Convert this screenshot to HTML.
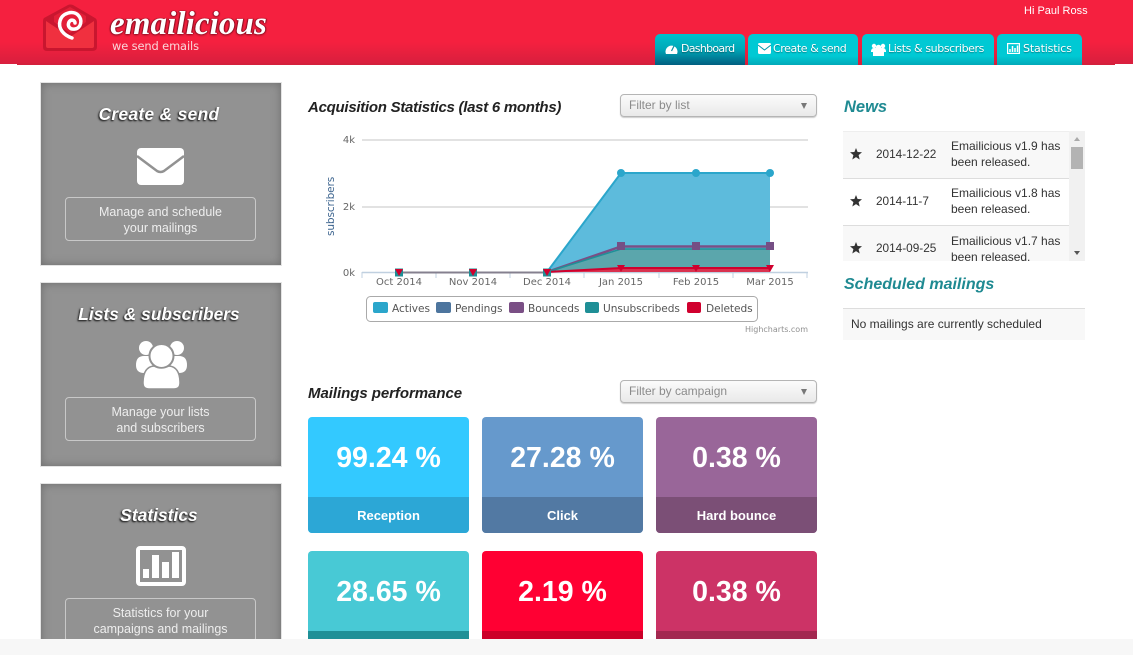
<!DOCTYPE html>
<html><head><meta charset="utf-8"><style>
*{box-sizing:border-box}
html,body{margin:0;padding:0;width:1133px;height:655px;overflow:hidden;background:#fff;font-family:"Liberation Sans",sans-serif}
.a{position:absolute}
#clip{position:absolute;left:0;top:0;width:1133px;height:639px;overflow:hidden}
.hd{left:0;top:0;width:1133px;height:64px;background:linear-gradient(#f5203f 0,#f5203f 42px,#d81f3e 64px)}
.hd2{left:17px;top:63px;width:1098px;height:2px;background:#d4203c}
.tab{top:34px;height:31px;background:linear-gradient(#00c9d4 0,#00c9d4 22px,#02a9b8 31px);border-radius:5px 5px 0 0;color:#fff;font:11px/30px "DejaVu Sans",sans-serif;letter-spacing:-.4px;white-space:nowrap;text-shadow:0 1px 1px rgba(0,0,0,.35)}
.tab svg{position:absolute;top:9px}
.tab span{position:absolute;top:0}
.card{left:41px;width:240px;background:#929292;box-shadow:inset 0 0 9px #6c6c6c;outline:1px solid #e4e4e4}
.ct{position:absolute;left:0;width:236px;text-align:center;top:19px;color:#fff;font:italic bold 17.2px/24px "Liberation Sans",sans-serif;letter-spacing:.1px;text-shadow:-1px 1px 1px #333,-1px 1px 2px #333}
.cb{position:absolute;left:24px;top:114px;width:191px;height:44px;border:1px solid #c8c8c8;border-radius:4px;text-align:center;color:#eee;font-size:12.5px;line-height:16px;padding-top:6px}
.h{color:#222;font:italic bold 15px/20px "Liberation Sans",sans-serif;white-space:nowrap}
.sel{left:620px;width:197px;height:23px;border:1px solid #b5b5b5;border-radius:4px;background:linear-gradient(#fbfbfb,#e9e9e9);color:#8b8b8b;font-size:12px;line-height:21px;padding-left:8px;box-shadow:0 1px 1px #ccc}
.sel i{position:absolute;right:9px;top:8px;width:0;height:0;border:3px solid transparent;border-top:6px solid #777;border-bottom:0}
.st{width:161px;height:116px;border-radius:4px;overflow:hidden;color:#fff;text-align:center}
.st b{display:block;font:bold 28.5px/34px "Liberation Sans",sans-serif;padding-top:24px;height:80px}
.st u{display:block;text-decoration:none;font:bold 13px/37px "Liberation Sans",sans-serif;height:36px}
.nt{font-size:12px;line-height:16px;color:#333;white-space:nowrap}
.tm{color:#1f8a92;font:italic bold 16.5px/20px "Liberation Sans",sans-serif;white-space:nowrap}
svg text{font-family:"DejaVu Sans",sans-serif}
</style></head><body>
<div id="clip">
<div class="a hd"></div><div class="a hd2"></div>

<svg class="a" style="left:40px;top:2px" width="60" height="52" viewBox="0 0 60 52">
<path d="M4 16 L28 3 Q30 2 33 3 L55 16 Q57 17 57 20 V45 Q57 49 52 49 H7 Q3 49 3 45 V20 Q3 17 4 16Z" fill="#c9162f"/>
<path d="M6 19 L30 35 L54 19 V44 Q54 46 52 46 H8 Q6 46 6 44Z" fill="#f0303f"/>
<path d="M14 14 L30 5 L46 14 L46 20 L30 31 L14 20Z" fill="#e31f38"/>
<path d="M32 36 C23 33 18 26 20 19 C22 11 33 8 38 13 C43 18 41 26 35 27 C30 28 27 24 29 20 C31 17 35 18 35 21" fill="none" stroke="#fff" stroke-width="3.500" stroke-linecap="round"/>
</svg>
<div class="a" style="left:110px;top:2px;color:#fff;font:italic bold 33px/44px 'Liberation Serif',serif;letter-spacing:.1px;text-shadow:0 1px 2px #8a0f22,1px 0 1px #8a0f22,-1px 0 1px #8a0f22;white-space:nowrap">emailicious</div>
<div class="a" style="left:112px;top:38px;color:#fbd5d9;font:11.4px/16px 'DejaVu Sans',sans-serif;letter-spacing:-.1px;white-space:nowrap">we send emails</div>
<div class="a" style="left:1024px;top:3px;color:#fff;font:11px/16px 'Liberation Sans',sans-serif;white-space:nowrap">Hi Paul Ross</div>

<div class="a tab" style="left:655px;width:90px;letter-spacing:-.7px;background:linear-gradient(#00c0cc 0,#00a8b8 15px,#015f80 31px)"><svg style="left:10px" width="13" height="12" viewBox="0 0 13 12"><path d="M1 11 A6 6 0 1 1 12 11Z" fill="#fff"/><path d="M6.500 8 L9 3" stroke="#0a8fa0" stroke-width="1.200"/></svg><span style="left:26px">Dashboard</span></div>
<div class="a tab" style="left:748px;width:110px"><svg style="left:10px" width="13" height="11" viewBox="0 0 13 11"><rect width="13" height="11" rx="1.500" fill="#fff"/><path d="M0 2 L6.500 7 L13 2" fill="none" stroke="#09a" stroke-width="1"/></svg><span style="left:25px">Create &amp; send</span></div>
<div class="a tab" style="left:862px;width:132px"><svg style="left:9px" width="15" height="13" viewBox="0 0 15 13"><circle cx="3" cy="3" r="2.200" fill="#fff"/><circle cx="12" cy="3" r="2.200" fill="#fff"/><circle cx="7.500" cy="4.500" r="2.800" fill="#fff"/><path d="M0 9 Q0 5 3 5 H12 Q15 5 15 9 H13 V13 H2 V9Z" fill="#fff"/></svg><span style="left:26px">Lists &amp; subscribers</span></div>
<div class="a tab" style="left:997px;width:85px;letter-spacing:-.15px"><svg style="left:10px" width="13" height="11" viewBox="0 0 13 11"><rect x=".6" y=".6" width="11.800" height="9.800" fill="none" stroke="#fff" stroke-width="1.200"/><path d="M3 9V6M5.500 9V3M8 9V5M10.500 9V2.500" stroke="#fff" stroke-width="1.500"/></svg><span style="left:26px">Statistics</span></div>

<div class="a card" style="top:83px;height:182px"><div class="ct" style="top:19px;letter-spacing:.4px">Create &amp; send</div>
<svg class="a" style="left:96px;top:65px" width="47" height="37" viewBox="0 0 47 37"><rect width="47" height="37" rx="4" fill="#fff"/><path d="M0 8 L20 23 Q23.500 25 27 23 L47 8" fill="none" stroke="#929292" stroke-width="2.500"/></svg>
<div class="cb">Manage and schedule<br>your mailings</div></div>

<div class="a card" style="top:283px;height:183px"><div class="ct">Lists &amp; subscribers</div>
<svg class="a" style="left:95px;top:58px" width="51" height="48" viewBox="0 0 51 48">
<circle cx="10" cy="7" r="7" fill="#fff"/><circle cx="41" cy="7" r="7" fill="#fff"/>
<path d="M0 24 Q0 15 8 15 H43 Q51 15 51 24 Q51 32 43 32 H8 Q0 32 0 24Z" fill="#fff"/>
<circle cx="25.500" cy="15" r="12" fill="#fff" stroke="#929292" stroke-width="2"/>
<path d="M7 42 Q7 26 18 25 Q25 29 33 25 Q44 26 44 42 Q44 48 38 48 H13 Q7 48 7 42Z" fill="#fff" stroke="#929292" stroke-width="1.500"/></svg>
<div class="cb">Manage your lists<br>and subscribers</div></div>

<div class="a card" style="top:484px;height:170px"><div class="ct">Statistics</div>
<svg class="a" style="left:95px;top:62px" width="50" height="40" viewBox="0 0 50 40"><rect x="2" y="2" width="46" height="36" rx="2" fill="none" stroke="#fff" stroke-width="4"/><path d="M7 23h6v9H7zM16 9h7v23h-7zM26 16h7v16h-7zM36 6h7v26h-7z" fill="#fff"/></svg>
<div class="cb">Statistics for your<br>campaigns and mailings</div></div>

<div class="a h" style="left:308px;top:98px;letter-spacing:-.27px">Acquisition Statistics (last 6 months)</div>
<div class="a sel" style="top:94px">Filter by list<i></i></div>

<svg class="a" style="left:310px;top:125px" width="510" height="215" viewBox="310 125 510 215">
<g stroke="#d8d8d8" stroke-width="1.500"><path d="M362 140H808M362 207H808"/></g>
<path d="M362 272.500H808" stroke="#c0d0e0" stroke-width="1.500"/>
<path d="M362 272V278M436 272V278M510 272V278M584 272V278M659 272V278M733 272V278M807 272V278" stroke="#c0d0e0"/>
<path d="M399 272.500H547" stroke="#85808f" stroke-width="2"/>
<g font-size="10" fill="#666"><text x="355" y="143" text-anchor="end">4k</text><text x="355" y="210" text-anchor="end">2k</text><text x="355" y="276" text-anchor="end">0k</text></g>
<g font-size="10" fill="#666" text-anchor="middle"><text x="399" y="285">Oct 2014</text><text x="473" y="285">Nov 2014</text><text x="547" y="285">Dec 2014</text><text x="621" y="285">Jan 2015</text><text x="696" y="285">Feb 2015</text><text x="770" y="285">Mar 2015</text></g>
<text transform="translate(334 236) rotate(-90)" font-size="10.500" fill="#3f6690" letter-spacing="-.1">subscribers</text>
<path d="M547 272 L621 173 H770 V272Z" fill="#5dbbdc"/>
<path d="M547 272 L621 173 H770" fill="none" stroke="#2ba6cb" stroke-width="2"/>
<path d="M547 272 L621 249 H770 V272Z" fill="#5ba6ac"/>
<path d="M547 272 L621 268 H770 V272Z" fill="#d9324f"/>
<path d="M547 272 L621 246.500 H770" fill="none" stroke="#7a4f85" stroke-width="2.500"/>
<path d="M547 272 L621 249 H770" fill="none" stroke="#1f9097" stroke-width="1.500"/>
<path d="M547 272 L621 268 H770" fill="none" stroke="#d0002e" stroke-width="2"/>
<g fill="#2ba6cb"><circle cx="621" cy="173" r="4"/><circle cx="696" cy="173" r="4"/><circle cx="770" cy="173" r="4"/></g>
<g fill="#754f85"><rect x="617" y="242" width="8" height="8"/><rect x="692" y="242" width="8" height="8"/><rect x="766" y="242" width="8" height="8"/></g>
<g fill="#d0002e"><path d="M617 265h8l-4 7zM692 265h8l-4 7zM766 265h8l-4 7z"/></g>
<g><rect x="395" y="268.500" width="8" height="8" fill="#1f8f96"/><rect x="469" y="268.500" width="8" height="8" fill="#1f8f96"/><rect x="543" y="268.500" width="8" height="8" fill="#1f8f96"/><path d="M395 269h8l-4 7zM469 269h8l-4 7zM543 269h8l-4 7z" fill="#d0002e"/></g>
<rect x="366.500" y="296.500" width="391" height="25" rx="4" fill="#fff" stroke="#aaa"/>
<rect x="373" y="302" width="15" height="11" rx="2" fill="#2ba6cb"/><rect x="436" y="302" width="15" height="11" rx="2" fill="#4d759e"/><rect x="509" y="302" width="15" height="11" rx="2" fill="#7a4f85"/><rect x="585" y="302" width="14" height="11" rx="2" fill="#1f8f96"/><rect x="687" y="302" width="14" height="11" rx="2" fill="#d0002e"/>
<g font-size="10.600" fill="#555" letter-spacing="-.05"><text x="392" y="312">Actives</text><text x="455" y="312">Pendings</text><text x="528" y="312">Bounceds</text><text x="603" y="312">Unsubscribeds</text><text x="706" y="312">Deleteds</text></g>
<text x="808" y="332" font-size="8" fill="#909090" text-anchor="end">Highcharts.com</text>
</svg>

<div class="a h" style="left:308px;top:384px;letter-spacing:-.05px">Mailings performance</div>
<div class="a sel" style="top:380px">Filter by campaign<i></i></div>

<div class="a st" style="left:308px;top:417px;background:#33c9ff"><b>99.24 %</b><u style="background:#2ca7d6">Reception</u></div>
<div class="a st" style="left:482px;top:417px;background:#6699cc"><b>27.28 %</b><u style="background:#5279a3">Click</u></div>
<div class="a st" style="left:656px;top:417px;background:#996699"><b>0.38 %</b><u style="background:#7b4f76">Hard bounce</u></div>
<div class="a st" style="left:308px;top:551px;background:#48c9d5"><b>28.65 %</b><u style="background:#1f9097"></u></div>
<div class="a st" style="left:482px;top:551px;background:#ff0033"><b>2.19 %</b><u style="background:#cc0029"></u></div>
<div class="a st" style="left:656px;top:551px;background:#cc3366"><b>0.38 %</b><u style="background:#a32850"></u></div>

<div class="a tm" style="left:844px;top:97px">News</div>
<div class="a" style="left:843px;top:131px;width:226px;height:130px;overflow:hidden;background:#fff">
<div class="a" style="left:0;top:0;width:226px;height:48px;background:#f8f8f8;border-top:1px solid #eee;border-bottom:1px solid #ddd"></div>
<div class="a" style="left:0;top:94px;width:226px;height:40px;background:#f8f8f8;border-top:1px solid #ddd"></div>
<div class="a nt" style="left:108px;top:7px">Emailicious v1.9 has<br>been released.</div>
<div class="a nt" style="left:108px;top:54px">Emailicious v1.8 has<br>been released.</div>
<div class="a nt" style="left:108px;top:102px">Emailicious v1.7 has<br>been released.</div>
<div class="a nt" style="left:33px;top:15px;font-size:11.800px">2014-12-22</div>
<div class="a nt" style="left:33px;top:62px;font-size:11.800px">2014-11-7</div>
<div class="a nt" style="left:33px;top:109px;font-size:11.800px">2014-09-25</div>
<svg class="a" style="left:7px;top:17px" width="12" height="106" viewBox="0 0 12 106"><g fill="#333"><path d="M6 0 L7.600 4 L12 4.300 L8.600 7.100 L9.700 11.500 L6 9.100 L2.300 11.500 L3.400 7.100 L0 4.300 L4.400 4Z"/><path transform="translate(0 47)" d="M6 0 L7.600 4 L12 4.300 L8.600 7.100 L9.700 11.500 L6 9.100 L2.300 11.500 L3.400 7.100 L0 4.300 L4.400 4Z"/><path transform="translate(0 94)" d="M6 0 L7.600 4 L12 4.300 L8.600 7.100 L9.700 11.500 L6 9.100 L2.300 11.500 L3.400 7.100 L0 4.300 L4.400 4Z"/></g></svg>
</div>
<div class="a" style="left:1069px;top:131px;width:16px;height:130px;background:#f1f1f1">
<div class="a" style="left:2px;top:16px;width:12px;height:22px;background:#b3b3b3"></div>
<i class="a" style="left:5px;top:6px;border:3px solid transparent;border-bottom:4px solid #aaa;border-top:0"></i>
<i class="a" style="left:5px;top:120px;border:3px solid transparent;border-top:4px solid #555;border-bottom:0"></i>
</div>
<div class="a tm" style="left:844px;top:275px;font-size:16px">Scheduled mailings</div>
<div class="a nt" style="left:843px;top:308px;width:242px;height:32px;background:#f8f8f8;border-top:1px solid #ddd;padding:7px 0 0 8px">No mailings are currently scheduled</div>
</div>
<div class="a" style="left:0;top:639px;width:1133px;height:16px;background:#f7f7f7"></div>
</body></html>
